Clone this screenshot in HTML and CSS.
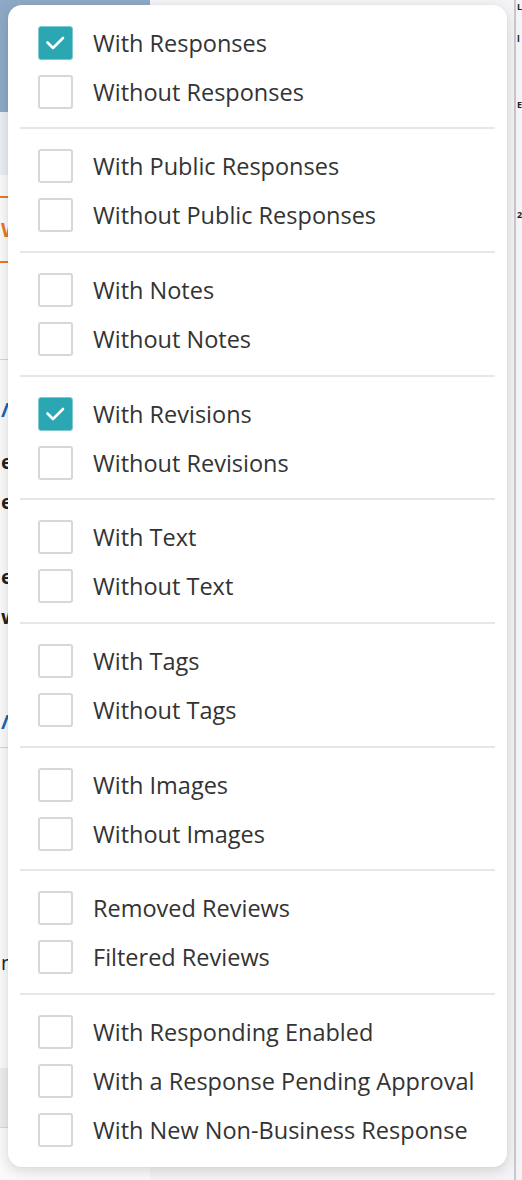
FILE: index.html
```html
<!DOCTYPE html>
<html lang="en">
<head>
<meta charset="utf-8">
<title>Filters</title>
<link rel="stylesheet" href="styles.css">
</head>
<body>
<div class="page">
  <div class="left-col">
    <div class="hero"></div>
    <div class="band"></div>
    <div class="tab"><span class="tab-text">W</span></div>
    <div class="rule r1"></div>
    <div class="frag f-blue f1">/</div>
    <div class="frag f2">e</div>
    <div class="frag f3">e</div>
    <div class="frag f4">e</div>
    <div class="frag f5">w</div>
    <div class="frag f-blue f6">/</div>
    <div class="rule r2"></div>
    <div class="frag f7">n</div>
    <div class="foot"></div>
  </div>
  <div class="mid-col"></div>
  <div class="right-col">
    <div class="rfrag rf1">L</div>
    <div class="rfrag rf2">l</div>
    <div class="rfrag rf3">E</div>
    <div class="rfrag rf4">2</div>
  </div>
</div>

<div class="menu">
  <div class="group">
    <label class="item"><span class="box checked"><svg viewBox="0 0 35 34" width="35" height="34"><path d="M9.5 16.5 L15 22 L25 12" fill="none" stroke="#fff" stroke-width="2.6" stroke-linecap="round" stroke-linejoin="round"/></svg></span><span class="label">With Responses</span></label>
    <label class="item"><span class="box"></span><span class="label">Without Responses</span></label>
  </div>
  <div class="group">
    <label class="item"><span class="box"></span><span class="label">With Public Responses</span></label>
    <label class="item"><span class="box"></span><span class="label">Without Public Responses</span></label>
  </div>
  <div class="group">
    <label class="item"><span class="box"></span><span class="label">With Notes</span></label>
    <label class="item"><span class="box"></span><span class="label">Without Notes</span></label>
  </div>
  <div class="group">
    <label class="item"><span class="box checked"><svg viewBox="0 0 35 34" width="35" height="34"><path d="M9.5 16.5 L15 22 L25 12" fill="none" stroke="#fff" stroke-width="2.6" stroke-linecap="round" stroke-linejoin="round"/></svg></span><span class="label">With Revisions</span></label>
    <label class="item"><span class="box"></span><span class="label">Without Revisions</span></label>
  </div>
  <div class="group">
    <label class="item"><span class="box"></span><span class="label">With Text</span></label>
    <label class="item"><span class="box"></span><span class="label">Without Text</span></label>
  </div>
  <div class="group">
    <label class="item"><span class="box"></span><span class="label">With Tags</span></label>
    <label class="item"><span class="box"></span><span class="label">Without Tags</span></label>
  </div>
  <div class="group">
    <label class="item"><span class="box"></span><span class="label">With Images</span></label>
    <label class="item"><span class="box"></span><span class="label">Without Images</span></label>
  </div>
  <div class="group">
    <label class="item"><span class="box"></span><span class="label">Removed Reviews</span></label>
    <label class="item"><span class="box"></span><span class="label">Filtered Reviews</span></label>
  </div>
  <div class="group">
    <label class="item"><span class="box"></span><span class="label">With Responding Enabled</span></label>
    <label class="item"><span class="box"></span><span class="label">With a Response Pending Approval</span></label>
    <label class="item"><span class="box"></span><span class="label">With New Non-Business Response</span></label>
  </div>
</div>
</body>
</html>
```

FILE: styles.css
```css
* { box-sizing: border-box; }
html, body { margin: 0; padding: 0; }
body {
  width: 522px;
  height: 1180px;
  overflow: hidden;
  position: relative;
  font-family: "Open Sans", "Liberation Sans", sans-serif;
  background: #f3f3f5;
}

.page {
  display: flex;
  height: 1180px;
}
.left-col {
  width: 150px;
  background: #fafafb;
  display: flex;
  flex-direction: column;
  position: relative;
}
.hero { height: 112px; background: #8ea9c6; flex: none; }
.band { height: 63px; background: #e9edf4; flex: none; }
.tab {
  margin-top: 21px;
  height: 67px;
  border-top: 2px solid #e8782a;
  border-bottom: 2px solid #e8782a;
  display: flex;
  align-items: center;
  flex: none;
}
.tab-text { color: #e8782a; font-size: 20px; font-weight: 700; margin-left: 1px; }
.rule { height: 1px; background: #d6d6da; flex: none; }
.r1 { margin-top: 96px; }
.frag { font-size: 20px; font-weight: 700; color: #222; line-height: 20px; flex: none; margin-left: 1px; }
.f-blue { color: #1a63b0; }
.f1 { margin-top: 40px; }
.f2 { margin-top: 32px; }
.f3 { margin-top: 20px; }
.f4 { margin-top: 55px; }
.f5 { margin-top: 20px; }
.f6 { margin-top: 85px; }
.r2 { margin-top: 15px; }
.f7 { margin-top: 205px; font-weight: 400; }
.foot { margin-top: 95px; height: 60px; background: #ececef; border-bottom: 1px solid #d6d6da; flex: none; }

.mid-col { flex: 1; background: #f4f4f6; }
.right-col {
  width: 8px;
  background: #f4f4f6;
  border-left: 2px solid #c9c9cd;
  display: flex;
  flex-direction: column;
  overflow: hidden;
}
.rfrag { font-size: 9px; font-weight: 700; color: #222; line-height: 14px; padding-left: 1px; }
.rf1 { margin-top: 0; }
.rf2 { margin-top: 18px; }
.rf3 { margin-top: 52px; }
.rf4 { margin-top: 96px; }

.menu {
  position: absolute;
  left: 8px;
  top: 5px;
  width: 499px;
  background: #ffffff;
  border-radius: 14px;
  box-shadow: 0 4px 14px rgba(0, 0, 0, 0.14), 0 0 2px rgba(0, 0, 0, 0.06);
  padding: 0 12px;
}
.group {
  padding: 12.4px 0 11.3px;
  border-bottom: 2px solid #e6e6eb;
}
.group:first-child { padding-top: 13px; }
.group:last-child { border-bottom: none; padding-bottom: 12px; }
.item {
  display: flex;
  align-items: center;
  height: 49px;
  padding-left: 18px;
  gap: 20px;
}
.box {
  width: 35px;
  height: 34px;
  border: 2px solid #d6d6db;
  border-radius: 3px;
  background: #fff;
  flex: none;
  display: flex;
}
.box.checked {
  background: #2aa7b2;
  border-color: #7fc9cf;
  border-width: 1px;
}
.box.checked svg { margin: -1px; }
.label {
  font-size: 23.5px;
  color: #333333;
}
```
